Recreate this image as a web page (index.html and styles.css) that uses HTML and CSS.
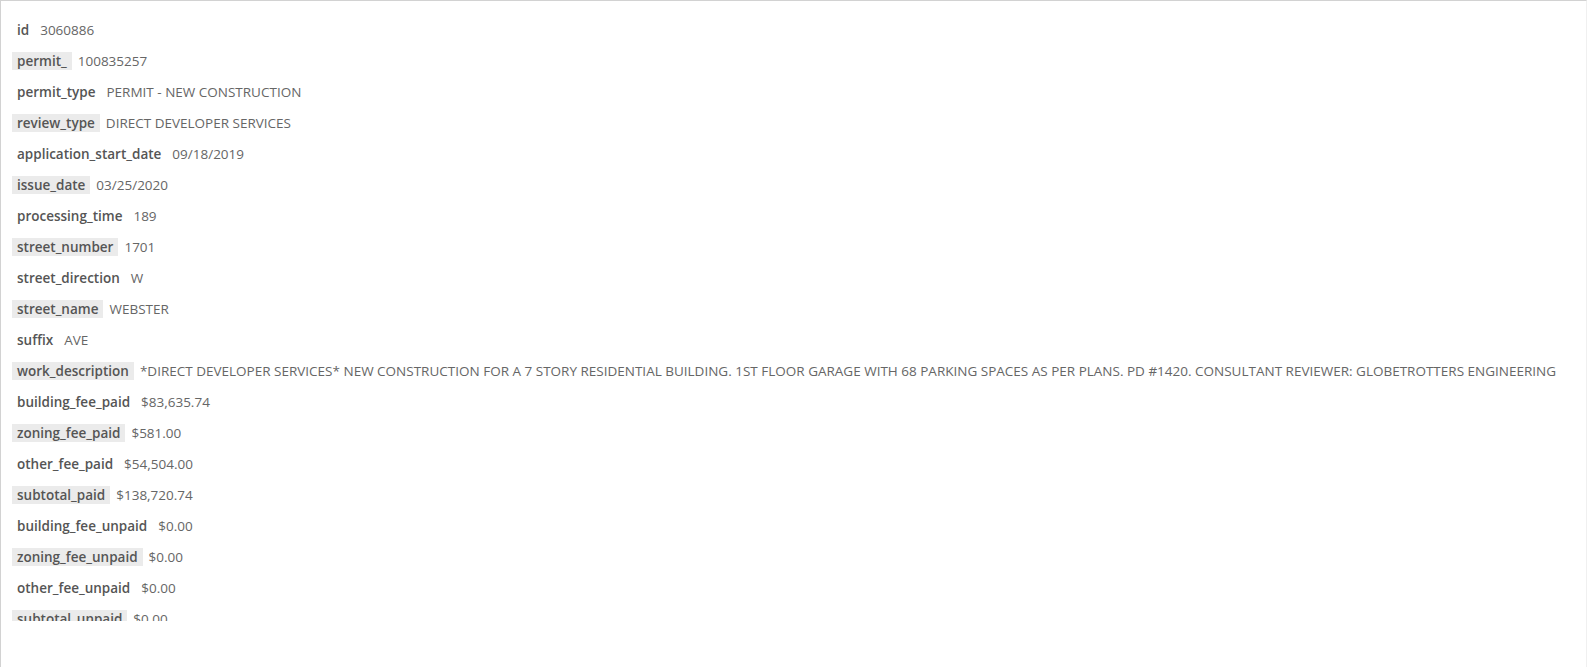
FILE: index.html
```html
<!DOCTYPE html>
<html lang="en">
<head>
  <meta charset="UTF-8" />
  <meta name="viewport" content="width=device-width, initial-scale=1.0" />
  <title>Permit record</title>
  <link rel="stylesheet" href="styles.css">
</head>
<body>
  <div class="panel">
    <div class="fields">
      <div class="field"><span class="label">id</span><span class="value">3060886</span></div>
      <div class="field"><span class="label">permit_</span><span class="value">100835257</span></div>
      <div class="field"><span class="label">permit_type</span><span class="value">PERMIT - NEW CONSTRUCTION</span></div>
      <div class="field"><span class="label">review_type</span><span class="value">DIRECT DEVELOPER SERVICES</span></div>
      <div class="field"><span class="label">application_start_date</span><span class="value">09/18/2019</span></div>
      <div class="field"><span class="label">issue_date</span><span class="value">03/25/2020</span></div>
      <div class="field"><span class="label">processing_time</span><span class="value">189</span></div>
      <div class="field"><span class="label">street_number</span><span class="value">1701</span></div>
      <div class="field"><span class="label">street_direction</span><span class="value">W</span></div>
      <div class="field"><span class="label">street_name</span><span class="value">WEBSTER</span></div>
      <div class="field"><span class="label">suffix</span><span class="value">AVE</span></div>
      <div class="field"><span class="label">work_description</span><span class="value">*DIRECT DEVELOPER SERVICES* NEW CONSTRUCTION FOR A 7 STORY RESIDENTIAL BUILDING. 1ST FLOOR GARAGE WITH 68 PARKING SPACES AS PER PLANS. PD #1420. CONSULTANT REVIEWER: GLOBETROTTERS ENGINEERING</span></div>
      <div class="field"><span class="label">building_fee_paid</span><span class="value">$83,635.74</span></div>
      <div class="field"><span class="label">zoning_fee_paid</span><span class="value">$581.00</span></div>
      <div class="field"><span class="label">other_fee_paid</span><span class="value">$54,504.00</span></div>
      <div class="field"><span class="label">subtotal_paid</span><span class="value">$138,720.74</span></div>
      <div class="field"><span class="label">building_fee_unpaid</span><span class="value">$0.00</span></div>
      <div class="field"><span class="label">zoning_fee_unpaid</span><span class="value">$0.00</span></div>
      <div class="field"><span class="label">other_fee_unpaid</span><span class="value">$0.00</span></div>
      <div class="field"><span class="label">subtotal_unpaid</span><span class="value">$0.00</span></div>
    </div>
  </div>
</body>
</html>
```

FILE: styles.css
```css
html, body {
  margin: 0;
  padding: 0;
  background: #fff;
}
body {
  font-family: "Open Sans", Arial, sans-serif;
  font-size: 13.5px;
  color: #555;
}
.panel {
  height: 667px;
  box-sizing: border-box;
  border-top: 1px solid #d2d2d2;
  border-left: 1px solid #d2d2d2;
  border-right: 1px solid #f0f0f0;
}
.fields {
  height: 620px;
  overflow: hidden;
  padding: 20px 0 0 11px;
  box-sizing: border-box;
}
.field {
  display: flex;
  align-items: center;
  gap: 6px;
  height: 18px;
  margin-bottom: 13px;
  white-space: nowrap;
}
.label {
  font-weight: 600;
  color: #555;
  padding: 0 5px;
  height: 18px;
  line-height: 18px;
}
.field:nth-child(even) .label {
  background: #ebebeb;
}
.value {
  color: #666;
  line-height: 18px;
}
```
